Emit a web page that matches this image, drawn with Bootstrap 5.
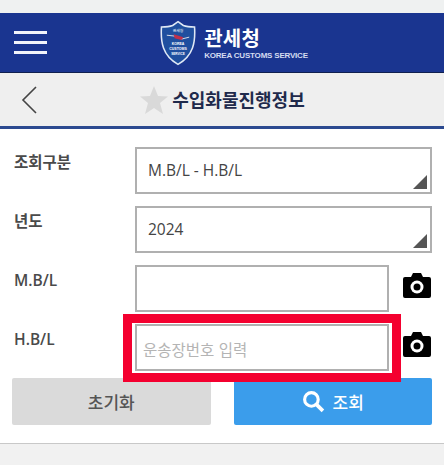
<!DOCTYPE html>
<html lang="ko">
<head>
  <meta charset="UTF-8" />
  <meta name="viewport" content="width=device-width, initial-scale=1.0" />
  <title>수입화물진행정보</title>
  <link href="https://cdn.jsdelivr.net/npm/bootstrap@5.3.3/dist/css/bootstrap.min.css" rel="stylesheet">
  <style>
    body {
      background-color: #f1f1f1;
      font-family: "Open Sans", "Noto Sans CJK KR", sans-serif;
      color: #333;
    }
    .top-gap {
      height: 13px;
      background: #eff1f1;
    }
    .site-header {
      height: 60px;
      padding-left: 24px;
      background: #1a3590;
      border-bottom: 1px solid #10204f;
    }
    .menu-btn {
      left: 14px;
      top: 18px;
      width: 33px;
      height: 23px;
    }
    .menu-btn span {
      display: block;
      height: 3px;
      background: #f2f4fa;
    }
    .brand-name {
      font-family: "Noto Sans CJK KR", sans-serif;
      font-size: 20px;
      font-weight: 700;
      line-height: 24px;
      color: #fff;
      letter-spacing: .3px;
    }
    .brand-sub {
      font-family: "Liberation Sans", sans-serif;
      font-size: 8px;
      line-height: 11px;
      font-weight: 700;
      letter-spacing: -.2px;
      color: #d5dcf0;
    }
    .brand-text {
      margin-left: 8px;
      margin-top: 1px;
    }
    .title-bar {
      height: 56px;
      background: #efefef;
      border-bottom: 3px solid #2c4a90;
    }
    .back-btn {
      left: 21px;
      top: 13px;
    }
    .page-title {
      font-family: "Noto Sans CJK KR", sans-serif;
      font-size: 18px;
      font-weight: 700;
      color: #1f2a4c;
      margin-left: 3px;
    }
    .form-area {
      background: #fff;
      height: 315px;
      padding: 18px 12px 0 14px;
      border-bottom: 1px solid #c8c8c8;
    }
    .form-line {
      display: flex;
      height: 47px;
      margin-bottom: 12px;
    }
    .form-line label {
      width: 121px;
      flex: none;
      font-size: 15.500px;
      font-weight: 600;
      line-height: 30px;
      color: #4a4a4a;
    }
    .field-box {
      flex: 1;
      height: 47px;
      border: 2px solid #b0b0b0;
      border-radius: 0;
      padding: 0 11px;
      font-size: 15.500px;
      color: #444;
      box-shadow: none;
    }
    .field-select {
      display: flex;
      align-items: center;
      padding-top: 1px;
    }
    .field-select::after {
      content: "";
      position: absolute;
      right: 3px;
      bottom: 3px;
      border-style: solid;
      border-width: 0 0 14px 14px;
      border-color: transparent transparent #555 transparent;
    }
    .mark-input {
      padding: 4px 0 0 6px;
    }
    .field-box::placeholder {
      color: #b4b4b4;
      font-family: "Noto Sans CJK KR", sans-serif;
    }
    .camera-icon {
      width: 29px;
      margin-left: 14px;
      padding-top: 6px;
    }
    .red-mark {
      left: -12px;
      top: -10px;
      right: -12px;
      bottom: -11px;
      border: 9px solid #f4002f;
      pointer-events: none;
    }
    .btn-line {
      margin-top: -5px;
      margin-left: -2px;
      gap: 23px;
    }
    .btn-line .btn {
      flex: 1;
      height: 47px;
      border: 0;
      border-radius: 2px;
      font-family: "Noto Sans CJK KR", sans-serif;
      font-size: 17px;
      font-weight: 500;
    }
    .btn-reset {
      background: #dadada;
      color: #555;
    }
    .btn-search {
      background: #3b9deb;
      color: #fff;
    }
    .btn-search:hover, .btn-reset:hover {
      background: #3b9deb;
    }
  </style>
</head>
<body>
  <div class="top-gap"></div>

  <header class="site-header position-relative d-flex justify-content-center align-items-center">
    <div class="menu-btn position-absolute d-flex flex-column justify-content-between">
      <span></span><span></span><span></span>
    </div>
    <div class="d-flex align-items-center">
      <svg width="36" height="46" viewBox="0 0 37 46">
        <path d="M18.5 1 L24 5 C28 6.5 32 6.5 35.5 6.5 C36.5 22 34.5 36 18.5 45 C2.5 36 .5 22 1.5 6.5 C5 6.5 9 6.5 13 5 Z" fill="#1f4f9f" stroke="#dfe8f5" stroke-width="1.6"/>
        <path d="M7 15 L16 16 L22 19 L30 17" fill="none" stroke="#d8dde8" stroke-width="1"/>
        <path d="M14 14 L24 17 L22 20 L15 18 Z" fill="#c0304a"/>
        <text x="18.5" y="12" text-anchor="middle" font-size="4" fill="#fff" font-family="Noto Sans CJK KR">관세청</text>
        <text x="18.5" y="25" text-anchor="middle" font-size="3.6" font-weight="700" fill="#fff" font-family="Liberation Sans">KOREA</text>
        <text x="18.5" y="30" text-anchor="middle" font-size="3.6" font-weight="700" fill="#fff" font-family="Liberation Sans">CUSTOMS</text>
        <text x="18.5" y="35" text-anchor="middle" font-size="3.2" font-weight="700" fill="#fff" font-family="Liberation Sans">SERVICE</text>
      </svg>
      <div class="brand-text">
        <div class="brand-name">관세청</div>
        <div class="brand-sub">KOREA CUSTOMS SERVICE</div>
      </div>
    </div>
  </header>

  <div class="title-bar position-relative d-flex justify-content-center align-items-center">
    <svg class="back-btn position-absolute" width="17" height="28" viewBox="0 0 17 28">
      <path d="M15 1 L2 14 L15 27" fill="none" stroke="#444" stroke-width="1.6"/>
    </svg>
    <svg width="30" height="30" viewBox="0 0 30 30">
      <path d="M15 1 L19 11 L29 11.500 L21 18 L24 29 L15 23 L6 29 L9 18 L1 11.500 L11 11 Z" fill="#d9d9d9"/>
    </svg>
    <div class="page-title">수입화물진행정보</div>
  </div>

  <form class="form-area">
    <div class="form-line">
      <label>조회구분</label>
      <div class="field-box field-select position-relative">M.B/L - H.B/L</div>
    </div>
    <div class="form-line">
      <label>년도</label>
      <div class="field-box field-select position-relative">2024</div>
    </div>
    <div class="form-line">
      <label>M.B/L</label>
      <input type="text" class="field-box form-control">
      <div class="camera-icon">
        <svg width="28" height="26" viewBox="0 0 28 26">
          <path d="M2 5 H8 L10 1 H18 L20 5 H26 Q28 5 28 7 V24 Q28 26 26 26 H2 Q0 26 0 24 V7 Q0 5 2 5 Z" fill="#000"/>
          <circle cx="14" cy="15" r="6.500" fill="#fff"/>
          <circle cx="14" cy="15" r="3.500" fill="#000"/>
        </svg>
      </div>
    </div>
    <div class="form-line">
      <label>H.B/L</label>
      <div class="position-relative d-flex flex-grow-1">
        <input type="text" class="field-box mark-input form-control" placeholder="운송장번호 입력">
        <div class="red-mark position-absolute"></div>
      </div>
      <div class="camera-icon">
        <svg width="28" height="26" viewBox="0 0 28 26">
          <path d="M2 5 H8 L10 1 H18 L20 5 H26 Q28 5 28 7 V24 Q28 26 26 26 H2 Q0 26 0 24 V7 Q0 5 2 5 Z" fill="#000"/>
          <circle cx="14" cy="15" r="6.500" fill="#fff"/>
          <circle cx="14" cy="15" r="3.500" fill="#000"/>
        </svg>
      </div>
    </div>
    <div class="btn-line d-flex">
      <button type="button" class="btn btn-reset">초기화</button>
      <button type="button" class="btn btn-search d-flex justify-content-center align-items-center gap-2">
        <svg width="23" height="23" viewBox="0 0 22 22">
          <circle cx="9" cy="9" r="6.500" fill="none" stroke="#fff" stroke-width="3"/>
          <path d="M13.500 13.500 L20 20" stroke="#fff" stroke-width="3.500"/>
        </svg>
        조회
      </button>
    </div>
  </form>
</body>
</html>
